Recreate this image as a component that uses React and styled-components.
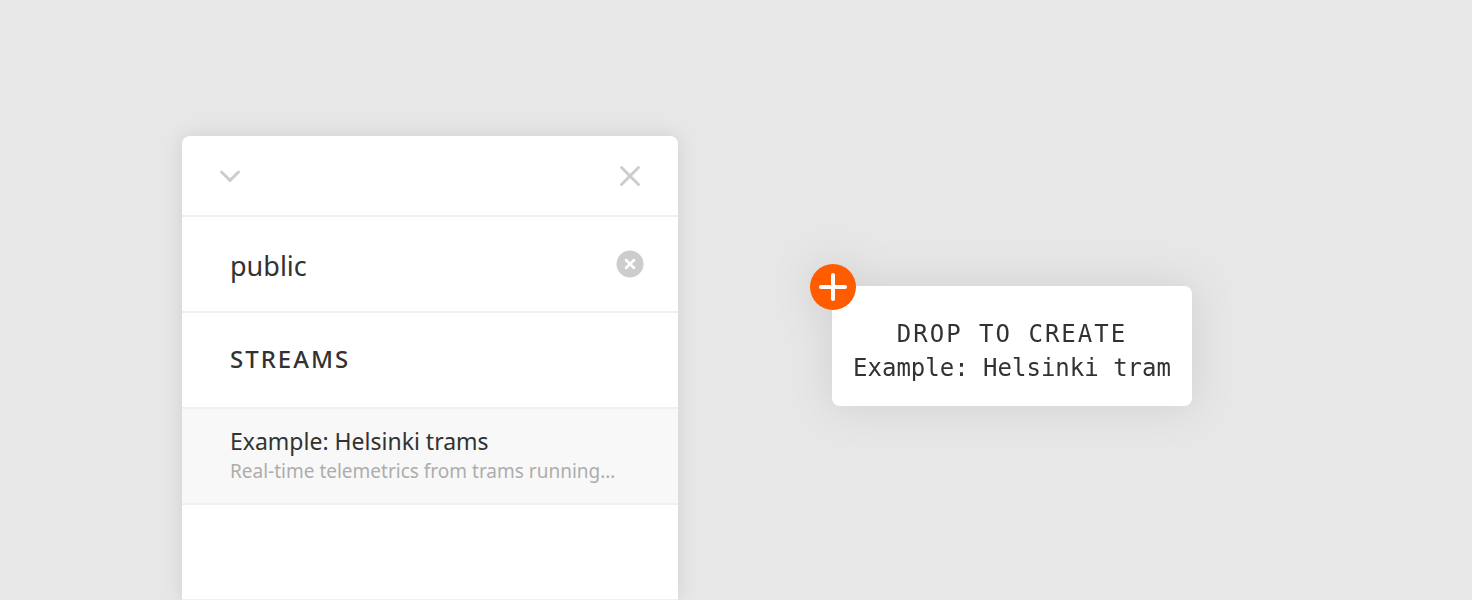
import React, { useState } from "react";
import styled, { createGlobalStyle } from "styled-components";

const GlobalStyle = createGlobalStyle`
  *, *::before, *::after { box-sizing: border-box; }
  body { margin: 0; background: #e7e7e7; color: #323232; font-family: "Noto Sans", sans-serif; }
`;

const Stage = styled.main`
  display: grid;
  grid-template-columns: 182fr 496fr 154fr 360fr 280fr;
  min-height: 100vh;
`;

const Panel = styled.section`
  grid-column: 2;
  display: flex;
  flex-direction: column;
  min-width: 0;
  margin-top: 136px;
  background: #fff;
  border-radius: 8px 8px 0 0;
  box-shadow: 0 0 20px rgba(0, 0, 0, 0.1);
`;

const Header = styled.header`
  display: flex;
  align-items: center;
  justify-content: space-between;
  padding: 24px 32px 23px;
`;

const Row = styled.div`
  display: flex;
  align-items: center;
  height: 96px;
  padding: 0 32px 0 48px;
  border-top: 2px solid #f0f0f0;
`;

const EmptyRow = styled(Row)`
  height: 97px;
  border-bottom: 1px solid #f0f0f0;
`;

const IconButton = styled.button`
  display: flex;
  align-items: center;
  justify-content: center;
  flex: none;
  width: 32px;
  height: 32px;
  padding: 0;
  border: 0;
  background: none;
  color: #cdcdcd;
  cursor: pointer;
`;

const SearchInput = styled.input`
  flex: 1;
  min-width: 0;
  padding: 4px 0 0;
  border: 0;
  outline: 0;
  background: none;
  color: inherit;
  font-family: inherit;
  font-size: 27px;
  line-height: 40px;
`;

const SectionTitle = styled.h2`
  margin: 0;
  padding-bottom: 2px;
  font-size: 24px;
  font-weight: 500;
  line-height: 32px;
  letter-spacing: 2px;
`;

const Result = styled.a`
  display: flex;
  flex-direction: column;
  justify-content: center;
  height: 96px;
  padding: 0 48px 2px;
  border-top: 2px solid #f0f0f0;
  background: #f8f8f8;
  color: inherit;
  text-decoration: none;
`;

const ResultName = styled.span`
  font-size: 23px;
  line-height: 32px;
`;

const ResultText = styled.span`
  color: #adadad;
  font-size: 19px;
  line-height: 28px;
  white-space: nowrap;
`;

const DropCard = styled.section`
  grid-column: 4;
  position: relative;
  align-self: start;
  min-width: 0;
  margin-top: 286px;
  padding: 31px 0 21px;
  border-radius: 8px;
  background: #fff;
  filter: drop-shadow(0 0 20px rgba(0, 0, 0, 0.1));
  font-family: "DejaVu Sans Mono", monospace;
  font-size: 24px;
  line-height: 34px;
  text-align: center;
  white-space: nowrap;
`;

const DropTitle = styled.p`
  margin: 0;
  letter-spacing: 2px;
`;

const DropName = styled.p`
  margin: 0;
`;

const AddBadge = styled.span`
  position: absolute;
  top: -22px;
  left: -22px;
  display: flex;
  width: 46px;
  height: 46px;
  border-radius: 50%;
  background: #ff5c00;
`;

export default function App() {
  const [query, setQuery] = useState("public");
  return (
    <>
      <GlobalStyle />
      <Stage>
        <Panel>
          <Header>
            <IconButton aria-label="Collapse">
              <svg width="24" height="24" viewBox="0 0 24 24" fill="none" stroke="currentColor" strokeWidth="3" strokeLinecap="round">
                <path d="M3.500 8L12 16.300L20.500 8" />
              </svg>
            </IconButton>
            <IconButton aria-label="Close">
              <svg width="24" height="24" viewBox="0 0 24 24" fill="none" stroke="currentColor" strokeWidth="3" strokeLinecap="round">
                <path d="M3.500 3.500L20.500 20.500M20.500 3.500L3.500 20.500" />
              </svg>
            </IconButton>
          </Header>
          <Row>
            <SearchInput aria-label="Search" value={query} onChange={(e) => setQuery(e.target.value)} />
            <IconButton aria-label="Clear search" onClick={() => setQuery("")}>
              <svg width="28" height="28" viewBox="0 0 28 28" fill="none" strokeLinecap="round">
                <circle cx="14" cy="14" r="13.500" fill="currentColor" />
                <path d="M10 10L18 18M18 10L10 18" stroke="#fff" strokeWidth="2.500" />
              </svg>
            </IconButton>
          </Row>
          <Row>
            <SectionTitle>STREAMS</SectionTitle>
          </Row>
          <Result href="#helsinki-trams">
            <ResultName>Example: Helsinki trams</ResultName>
            <ResultText>Real-time telemetrics from trams running…</ResultText>
          </Result>
          <EmptyRow />
        </Panel>
        <DropCard>
          <AddBadge>
            <svg width="46" height="46" viewBox="0 0 46 46" fill="none" stroke="#fff" strokeWidth="4" strokeLinecap="round" aria-hidden="true">
              <path d="M23 11V35M11 23H35" />
            </svg>
          </AddBadge>
          <DropTitle>DROP TO CREATE</DropTitle>
          <DropName>Example: Helsinki tram</DropName>
        </DropCard>
      </Stage>
    </>
  );
}
